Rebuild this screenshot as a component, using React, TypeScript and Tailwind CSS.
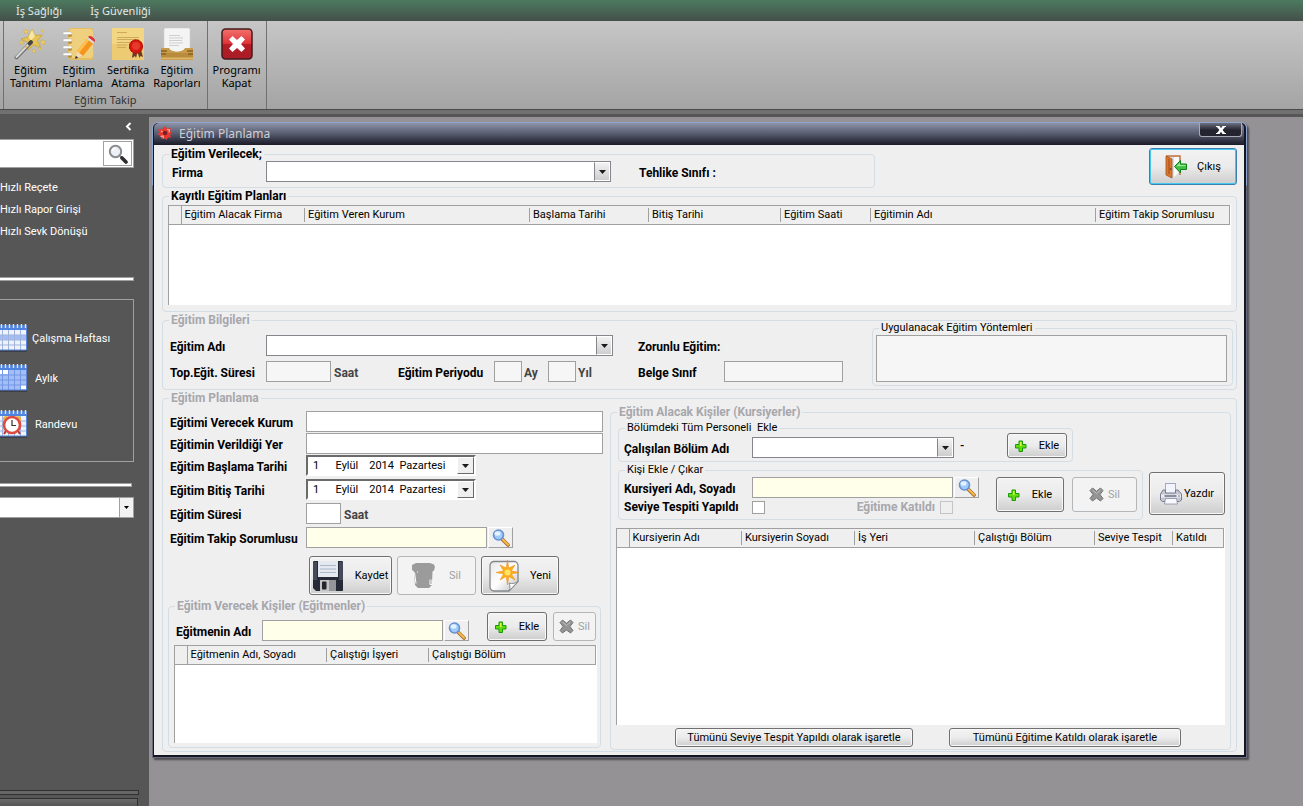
import React, { ReactNode } from "react";
import clsx from "clsx";

/* ---------- Ribbon icons ---------- */

const WandIcon = () => (
  <svg width="32" height="32" viewBox="0 0 32 32">
    <path d="M18 1l3 6.500 7.500-.5-5 5.500 3 7-7-2.500-5.500 5-.5-7.500L7 11l7-2z" fill="#e6c355" stroke="#c9a33c" strokeWidth=".8" />
    <path d="M18 1.500l3 6.500-4 4.500L14.500 9z" fill="#f8e7a0" />
    <path d="M2.500 29.500L17 14.500" stroke="#6e6e6e" strokeWidth="3.800" strokeLinecap="round" />
    <path d="M2.500 29L15 16" stroke="#d9d9d9" strokeWidth="2" strokeLinecap="round" />
    <path d="M15.500 15.500l1.500-1.500" stroke="#444" strokeWidth="3.800" strokeLinecap="round" />
    <g fill="#f0cf62" stroke="#c9a33c" strokeWidth=".4">
      <path d="M12 1l.8 1.600 1.800.2-1.300 1.200.4 1.800L12 5l-1.700.8.4-1.800-1.300-1.200 1.800-.2z" />
      <path d="M29 11l.9 2 2.100.2-1.600 1.400.5 2.200-1.900-1.100-1.900 1.100.5-2.200-1.600-1.400 2.100-.2z" />
      <path d="M7.500 12l.7 1.400 1.600.2-1.200 1.100.3 1.600-1.400-.8-1.400.8.3-1.600-1.200-1.100 1.600-.2z" />
      <circle cx="20" cy="23" r="1.500" />
      <circle cx="28.500" cy="3" r="1.200" />
      <circle cx="26" cy="21" r="1.200" />
      <circle cx="12" cy="19" r="1" />
    </g>
  </svg>
);

const NotebookIcon = () => (
  <svg width="32" height="32" viewBox="0 0 32 32">
    <rect x="5" y="0" width="26" height="32" rx="4" fill="#e4bd63" />
    <rect x="6" y="1" width="24" height="29" rx="3" fill="#efd07f" />
    {[5, 12, 19, 26].map((y) => (
      <g key={y}>
        <rect x="5" y={y - 1} width="4" height="5" rx="2" fill="#b98f38" />
        <rect x="0" y={y - 1} width="9" height="2.500" rx="1.200" fill="#fff" stroke="#aaa" strokeWidth=".4" />
      </g>
    ))}
    <path d="M12 31l2-8L24 11l6 4.500L20 28z" fill="#f5941e" />
    <path d="M14 23L24 11l2 1.500L16 25z" fill="#ffc04d" />
    <path d="M12 31l2-8 6 5z" fill="#f3dcae" />
    <path d="M12 31l.8-3.200 2.400 1.900z" fill="#333" />
    <path d="M24 11l1.600-2 6 4.500-1.600 2z" fill="#d9d9d9" />
    <path d="M25.600 9c1.500-1.800 6.400 1.200 6 4.500z" fill="#dd2f2f" stroke="#dd2f2f" />
  </svg>
);

const CertificateIcon = () => (
  <svg width="32" height="32" viewBox="0 0 32 32">
    <rect width="32" height="32" rx="1" fill="#eccb72" />
    <rect width="32" height="16" rx="1" fill="#f2d684" />
    <path d="M5 4.500h10M5 9.500h22M5 11.500h22M5 14.500h14M5 17h10M5 19.500h9" stroke="#cfa95a" strokeWidth="1" />
    <path d="M21 23l-1 7 3-2 1 2 1.500-6 2 6 1-2 2.500 1-2-7z" fill="#6e3a26" />
    <circle cx="24" cy="18.500" r="7" fill="#d31a12" />
    <circle cx="24" cy="18.500" r="6.500" fill="none" stroke="#a80f0a" strokeWidth="1" strokeDasharray="2 1.500" />
    <circle cx="24" cy="18" r="4" fill="#e63a2b" />
  </svg>
);

const TrayIcon = () => (
  <svg width="32" height="32" viewBox="0 0 32 32">
    <rect x="3" y="0" width="26" height="26" rx="1.500" fill="#f4f4f4" stroke="#d0d0d0" strokeWidth=".6" />
    <path d="M8 7.500h11M8 10h14M8 12.500h13M8 15h14M8 17.500h10" stroke="#cfcfcf" strokeWidth="1" />
    <path d="M0 20h8c1 5 15 5 16 0h8v12H0z" fill="#b98b3c" />
    <path d="M0 20h8c1 5 15 5 16 0h8v5H0z" fill="#c79b48" />
    <path d="M9 18h14c0 7-14 7-14 0z" fill="#f4f4f4" />
    <path d="M0 30.500h32" stroke="#dcb669" strokeWidth="2" />
    <path d="M0 23h6M0 26h5M26 23h6M27 26h5" stroke="#8a6122" strokeWidth="1.500" />
  </svg>
);

const CloseAppIcon = () => (
  <svg width="32" height="32" viewBox="0 0 32 32">
    <defs>
      <linearGradient id="closeRed" x1="0" y1="0" x2="0" y2="1">
        <stop offset="0" stopColor="#f2726c" />
        <stop offset=".48" stopColor="#e0343a" />
        <stop offset=".52" stopColor="#b51c26" />
        <stop offset="1" stopColor="#a81d26" />
      </linearGradient>
    </defs>
    <rect x="1" y="1" width="30" height="30" rx="3.500" fill="url(#closeRed)" stroke="#451a1c" strokeWidth="1.500" />
    <path d="M11.500 8L16 12l4.500-4 3.500 3.500-4 4.500 4 4.500-3.500 3.500-4.500-4-4.500 4L8 20.500l4-4.500-4-4.500z" fill="#fff" />
  </svg>
);

/* ---------- Form icons ---------- */

const LookupIcon = () => (
  <svg width="18" height="18" viewBox="0 0 18 18">
    <path d="M10 10l6 6" stroke="#a2692a" strokeWidth="3.600" strokeLinecap="round" />
    <path d="M10.500 10.300l5.500 5.500" stroke="#f6bb4d" strokeWidth="2" strokeLinecap="round" />
    <circle cx="6.500" cy="6" r="5" fill="#9dcbfa" stroke="#6a8fd0" strokeWidth="1.600" />
    <ellipse cx="5.500" cy="4.500" rx="3" ry="2.200" fill="#e3f2ff" />
  </svg>
);

const GreySearchIcon = () => (
  <svg width="20" height="20" viewBox="0 0 20 20">
    <path d="M12 12l2 2" stroke="#888" strokeWidth="2" />
    <path d="M14 14l4 4" stroke="#2d2d2d" strokeWidth="3.600" strokeLinecap="round" />
    <circle cx="7.500" cy="7.500" r="5.700" fill="#eef0f8" stroke="#8b8b8f" strokeWidth="2" />
    <path d="M4.500 7a3.500 3.500 0 013-3" stroke="#fff" strokeWidth="1.500" fill="none" />
  </svg>
);

const DoorIcon = () => (
  <svg width="22" height="24" viewBox="0 0 22 24">
    <path d="M1 1h14v17l-5 4.500L7 23z" fill="#dcdcdc" />
    <path d="M9 2h5v15l-5 5z" fill="#fafafa" />
    <path d="M1 1h14v5M15 17v3" stroke="#c4713a" strokeWidth="1.400" fill="none" />
    <path d="M1 1l6 3v19l-6-3z" fill="#d9772f" stroke="#a3521b" strokeWidth=".8" />
    <path d="M3 3.500l2 1v15l-2-1z" fill="#c06020" />
    <circle cx="5.800" cy="14" r=".8" fill="#4b2a10" />
    <path d="M9.500 11.500l6-6v3.500h6v5.500h-6V18z" fill="#3fc046" stroke="#13801a" strokeWidth="1" />
    <path d="M11.500 11.300l3.500-3.500V10h5.500v1z" fill="#a6eb9c" />
  </svg>
);

const PlusIcon = () => (
  <svg width="12" height="12" viewBox="0 0 12 12">
    <path d="M4 1h3.500v3.500H11V8H7.500v3.500H4V8H.5V4.500H4z" fill="#63dc10" stroke="#189a08" strokeWidth="1" />
    <path d="M5 2h1.500v4H5z" fill="#e0f547" />
  </svg>
);

const CrossIcon = () => (
  <svg width="15" height="15" viewBox="0 0 15 15">
    <path d="M3.500 1L7.500 4.200 11.500 1 14 3.500 11 7.500l3 4-2.500 2.500-4-3-4 3L1 11.500l3-4-3-4z" fill="#949494" stroke="#757575" strokeWidth="1" strokeLinejoin="round" />
    <path d="M3.500 3l4 3.500 4-3.500" stroke="#bcbcbc" strokeWidth="1" fill="none" />
  </svg>
);

const FloppyIcon = () => (
  <svg width="30" height="30" viewBox="0 0 30 30">
    <path d="M1 0h28a1 1 0 011 1v28a1 1 0 01-1 1H3l-3-3V1a1 1 0 011-1z" fill="#262a36" />
    <path d="M0 1h4v18H0zM26 1h4v18h-4z" fill="#454a59" />
    <rect x="5" y="0" width="20" height="16" fill="#e5e9ef" />
    <path d="M7 4.500h16M7 8h16M7 11.500h16" stroke="#a9b8cc" strokeWidth="1" />
    <rect x="7" y="19" width="16" height="11" fill="#c4c4c6" />
    <rect x="16" y="19" width="7" height="11" fill="#96969a" />
    <rect x="9" y="20.500" width="4.500" height="8" rx="1" fill="#22252e" />
  </svg>
);

const TrashIcon = () => (
  <svg width="23" height="25" viewBox="0 0 23 25">
    <path d="M4 0h14l4 1.500 1 2.500-1 3.500-1.500 1L20 22l-3 3H6l-3-3L2 8.500 0 7V2z" fill="#9b9b9b" />
    <path d="M2.500 9.500L4 20.500M5 9h1M20 16.500v5h-2v-5" stroke="#fff" strokeWidth="1" fill="none" />
  </svg>
);

const NewDocIcon = () => (
  <svg width="30" height="32" viewBox="0 0 30 32">
    <defs>
      <linearGradient id="docPaper" x1="0" y1="0" x2="1" y2="1">
        <stop offset="0" stopColor="#e6e6e6" />
        <stop offset=".5" stopColor="#fff" />
        <stop offset="1" stopColor="#bdbdbd" />
      </linearGradient>
    </defs>
    <path d="M5 1.500h20a4 4 0 014 4v16L20 31H5a4 4 0 01-4-4V5.500a4 4 0 014-4z" fill="url(#docPaper)" stroke="#85898d" strokeWidth="1.300" />
    <path d="M20 31c1.500-3 1-6 0-8 3 1 6 .5 9-1.500z" fill="#fff" stroke="#85898d" strokeWidth="1" />
    <path d="M18.500 0l1.300 8L26 5l-3.600 5.800L30 12.500l-7.600 1.400L26 20l-6.200-3.600L18.500 25l-1.300-8.600L11 20l3.600-6.100L7 12.500l7.600-1.700L11 5l6.200 3z" fill="#ffae1a" stroke="#e68a0c" strokeWidth=".5" />
    <circle cx="18.500" cy="12.500" r="3" fill="#ffe36b" />
  </svg>
);

const PrinterIcon = () => (
  <svg width="22" height="22" viewBox="0 0 22 22">
    <rect x="5.500" y=".5" width="10" height="10" fill="#f1f4fd" stroke="#a2a9c4" />
    <path d="M3 7h2.500v3h10V7H18l3.500 4v6l-2 1.500h-17L.5 17v-6z" fill="#c4c6d2" stroke="#6f7386" strokeWidth=".9" />
    <path d="M1 11.500h20v3H1z" fill="#edeef4" />
    <path d="M4.500 13h12" stroke="#4c4f60" strokeWidth="1.200" />
    <path d="M5.500 15.500h11l1 5.500h-13z" fill="#f8f9fd" stroke="#8a8ea4" strokeWidth=".8" />
    <circle cx="19" cy="13" r=".8" fill="#6b6b7b" />
  </svg>
);

const AppLogo = () => (
  <svg width="14" height="14" viewBox="0 0 14 14">
    <path d="M7 0l2 2.500 4-.5-1 3 2 1.500-1.800 2 .8 3.200-3-.2L8.500 14 6 12l-3 1-.3-3L0 8.500 1.200 6 0 3.500 4.500 3z" fill="#e8392f" />
    <circle cx="7" cy="7" r="2.200" fill="#7c1c25" />
    <path d="M2.500 10.500l2.500-.5.500 2.500M9 3.500l2.500.5-.5 2.500M3 5l1.500 1" fill="none" stroke="#f6b5ac" strokeWidth="1.200" />
  </svg>
);

// Takvim ikonu, sol kenarı panelin dışında kalıyor
const CalendarIcon = ({ kind }: { kind: "week" | "month" | "clock" }) => (
  <svg width="27" height="28" viewBox="0 0 27 28">
    <rect x="-4" y="26" width="31" height="2" fill="#3c3f47" />
    <rect x="-4" y="2" width="31" height="24" fill="#eef2fa" />
    <rect x="-4" y="1" width="31" height="5" fill="#4f83e0" />
    {kind === "week" && <rect x="-4" y="11" width="31" height="5" fill="#a3bdf6" />}
    {kind === "month" && <path d="M-4 6h31v20H-4z" fill="#a3bdf6" />}
    {kind === "month" && <path d="M0 6h8v4H0zM21 21h5v4h-5z" fill="#fff" />}
    <path
      d="M-4 11h31M-4 16h31M-4 21h31M2.500 6v20M8.500 6v20M14.500 6v20M20.500 6v20"
      stroke={kind === "month" ? "#7598e6" : "#9fb3dc"}
      strokeWidth="1"
    />
    <path d="M26.500 1v25H0" stroke="#5b86d6" strokeWidth="1" fill="none" />
    <path d="M1.500 0v4M5.500 0v4M9.500 0v4M13.500 0v4M17.500 0v4M21.500 0v4M25.500 0v4" stroke="#dfe4ee" strokeWidth="1.400" />
    {kind === "clock" && (
      <g>
        <circle cx="6" cy="9" r="3" fill="#e9b64a" />
        <circle cx="18" cy="9" r="3" fill="#e9b64a" />
        <path d="M6 21l-2 3M18 21l2 3" stroke="#b3352c" strokeWidth="2" />
        <circle cx="12" cy="15" r="8" fill="#fff" stroke="#dc4a40" strokeWidth="2.600" />
        <path d="M12 10v5.500h4" stroke="#333" strokeWidth="1.200" fill="none" />
      </g>
    )}
  </svg>
);

const Arrow = () => (
  <svg width="7" height="4" viewBox="0 0 7 4">
    <path d="M0 0h7L3.500 4z" fill="#1a1a1a" />
  </svg>
);

/* ---------- Shared controls ---------- */

const Group = ({
  title,
  muted,
  plain,
  className,
  bodyClassName,
  children,
}: {
  title: string;
  muted?: boolean;
  plain?: boolean;
  className?: string;
  bodyClassName?: string;
  children: ReactNode;
}) => (
  <fieldset className={clsx("min-w-0 rounded-[4px] border border-[#d3dde6]", className)}>
    <legend
      className={clsx(
        "ml-1.5 px-0.5 leading-[14px] whitespace-pre",
        !plain && "text-[12px] font-bold",
        muted ? "text-[#a7a7ad]" : "text-black"
      )}
    >
      {title}
    </legend>
    <div className={bodyClassName}>{children}</div>
  </fieldset>
);

const Label = ({ id, className, children }: { id: string; className?: string; children: ReactNode }) => (
  <label htmlFor={id} className={clsx("shrink-0 pt-1 text-[12px] font-bold whitespace-nowrap", className)}>
    {children}
  </label>
);

const TextBox = ({
  id,
  className,
  disabled,
  lookup,
}: {
  id: string;
  className?: string;
  disabled?: boolean;
  lookup?: boolean;
}) => (
  <input
    id={id}
    type="text"
    disabled={disabled}
    className={clsx(
      "h-[21px] shrink-0 border border-[#a0a0a0] px-1 outline-none",
      disabled ? "bg-[#f6f6f6]" : lookup ? "bg-[#ffffea]" : "bg-white",
      className
    )}
  />
);

const Combo = ({ id, className }: { id: string; className?: string }) => (
  <div className={clsx("grid h-[21px] shrink-0 border border-[#85858c] bg-white", className)}>
    <select id={id} className="col-start-1 row-start-1 w-full appearance-none bg-transparent outline-none">
      <option></option>
    </select>
    <span className="pointer-events-none col-start-1 row-start-1 flex w-4 items-center justify-center justify-self-end border border-l-[#85858c] border-t-white border-r-white border-b-white bg-linear-to-b from-[#f2f2f2] to-[#cecece]">
      <Arrow />
    </span>
  </div>
);

const DateBox = ({ id }: { id: string }) => (
  <div className="grid h-[21px] w-[170px] shrink-0 border-2 border-t-[#6b6b6b] border-r-white border-b-white border-l-[#6b6b6b] bg-white">
    <select id={id} className="col-start-1 row-start-1 w-full appearance-none bg-transparent pl-[5px] outline-none">
      <option>{"1\u00a0\u00a0\u00a0\u00a0\u00a0\u00a0Eylül\u00a0\u00a0\u00a0\u00a02014\u00a0\u00a0Pazartesi"}</option>
    </select>
    <span className="pointer-events-none col-start-1 row-start-1 flex w-[17px] items-center justify-center justify-self-end border border-t-white border-r-[#6b6b6b] border-b-[#6b6b6b] border-l-white bg-[#efefef]">
      <Arrow />
    </span>
  </div>
);

const LookupButton = ({ label }: { label: string }) => (
  <button
    aria-label={label}
    className="ml-px flex h-[21px] w-[25px] shrink-0 items-center justify-center border border-t-white border-r-[#a0a0a0] border-b-[#a0a0a0] border-l-white bg-[#efefef]"
  >
    <LookupIcon />
  </button>
);

const Button = ({
  icon,
  disabled,
  className,
  children,
}: {
  icon?: ReactNode;
  disabled?: boolean;
  className?: string;
  children: ReactNode;
}) => (
  <button
    disabled={disabled}
    className={clsx(
      "flex shrink-0 items-center justify-center rounded-[3px] border whitespace-nowrap",
      disabled
        ? "border-[#b4b7b9] bg-[#f3f3f3] text-[#a0a0a4]"
        : "border-[#707070] bg-linear-to-b from-[#f3f3f3] from-0% via-[#ebebeb] via-50% to-[#cdcdcd] text-black inset-ring inset-ring-[#f8f8f8]",
      className
    )}
  >
    {icon}
    {children}
  </button>
);

type Column = { title: string; width: string };

const DataTable = ({ columns, className }: { columns: Column[]; className?: string }) => (
  <div className={clsx("border-l border-[#a0a0a0] bg-white pr-px", className)}>
    <table className="w-full table-fixed border-collapse">
      <thead>
        <tr className="h-[19px] border-y border-r border-[#a0a0a0] bg-[#efefef]">
          <th className="w-3 border-r border-[#a0a0a0] p-0"></th>
          {columns.map((col, i) => (
            <th key={col.title} className={clsx("p-0 text-left font-normal", col.width)}>
              <span
                className={clsx(
                  "block overflow-hidden pl-[3px] leading-[14px] whitespace-nowrap",
                  i < columns.length - 1 && "border-r border-[#a0a0a0]"
                )}
              >
                {col.title}
              </span>
            </th>
          ))}
        </tr>
      </thead>
      <tbody></tbody>
    </table>
  </div>
);

/* ---------- Data ---------- */

const ribbonItems = [
  { line1: "Eğitim", line2: "Tanıtımı", icon: <WandIcon /> },
  { line1: "Eğitim", line2: "Planlama", icon: <NotebookIcon /> },
  { line1: "Sertifika", line2: "Atama", icon: <CertificateIcon /> },
  { line1: "Eğitim", line2: "Raporları", icon: <TrayIcon /> },
];

const planColumns: Column[] = [
  { title: "Eğitim Alacak Firma", width: "w-[124px]" },
  { title: "Eğitim Veren Kurum", width: "w-[225px]" },
  { title: "Başlama Tarihi", width: "w-[119px]" },
  { title: "Bitiş Tarihi", width: "w-[132px]" },
  { title: "Eğitim Saati", width: "w-[90px]" },
  { title: "Eğitimin Adı", width: "w-[225px]" },
  { title: "Eğitim Takip Sorumlusu", width: "w-auto" },
];

const trainerColumns: Column[] = [
  { title: "Eğitmenin Adı, Soyadı", width: "w-[140px]" },
  { title: "Çalıştığı İşyeri", width: "w-[102px]" },
  { title: "Çalıştığı Bölüm", width: "w-auto" },
];

const traineeColumns: Column[] = [
  { title: "Kursiyerin Adı", width: "w-[113px]" },
  { title: "Kursiyerin Soyadı", width: "w-[113px]" },
  { title: "İş Yeri", width: "w-[120px]" },
  { title: "Çalıştığı Bölüm", width: "w-[120px]" },
  { title: "Seviye Tespit", width: "w-[78px]" },
  { title: "Katıldı", width: "w-auto" },
];

/* ---------- Page parts ---------- */

const RibbonButton = ({ icon, line1, line2 }: { icon: ReactNode; line1: string; line2: string }) => (
  <button className="flex flex-col items-center pt-[7px] leading-[13px]">
    {icon}
    <span className="pt-[3px]">{line1}</span>
    <span>{line2}</span>
  </button>
);

const Ribbon = () => (
  <header className="font-['Noto_Sans',sans-serif] text-[11px]">
    <nav className="flex h-[21px] items-center gap-7 bg-linear-to-b from-[#4c7a5f] to-[#43504a] pl-4 text-[#e4e8e4]">
      <a href="#saglik">İş Sağlığı</a>
      <a href="#guvenlik">İş Güvenliği</a>
    </nav>
    <div className="flex h-[88px] bg-linear-to-b from-[#c6c6c6] to-[#a4a4a4] pl-[3px] text-black">
      <div className="flex flex-col border-x border-[#707070] px-1.5">
        <div className="flex gap-1">
          {ribbonItems.map((item) => (
            <RibbonButton key={item.line2} {...item} />
          ))}
        </div>
        <div className="pt-1 text-center leading-[13px] text-[#333]">Eğitim Takip</div>
      </div>
      <div className="border-r border-[#707070] px-[5px]">
        <RibbonButton icon={<CloseAppIcon />} line1="Programı" line2="Kapat" />
      </div>
    </div>
    <div className="h-2 border-t border-[#4a4a4a] bg-linear-to-b from-[#707070] from-50% to-[#565656] to-50%"></div>
  </header>
);

const Sidebar = () => (
  <aside className="flex w-[149px] shrink-0 flex-col bg-[#565656] text-white">
    <button aria-label="Paneli daralt" className="mr-[17px] flex h-[18px] items-center self-end">
      <svg width="7" height="9" viewBox="0 0 7 9">
        <path d="M5.500 1L2 4.500 5.500 8" stroke="#fff" strokeWidth="2" fill="none" />
      </svg>
    </button>
    <div className="mt-1 mr-[15px] flex h-[29px] border border-l-0 border-[#a0a0a0] bg-white p-px">
      <input aria-label="Ara" type="text" className="min-w-0 flex-1 px-1 text-black outline-none" />
      <button aria-label="Bul" className="flex w-[29px] items-center justify-center border border-[#a0a0a0]">
        <GreySearchIcon />
      </button>
    </div>
    <nav className="mt-[9px] flex flex-col leading-[22px]">
      <a href="#recete">Hızlı Reçete</a>
      <a href="#rapor">Hızlı Rapor Girişi</a>
      <a href="#sevk">Hızlı Sevk Dönüşü</a>
    </nav>
    <div className="mt-[34px] mr-[15px] h-1 border-y border-r border-[#a0a0a0] bg-white"></div>
    <div className="mt-[18px] mr-[15px] flex h-[163px] flex-col border border-l-0 border-[#a0a0a0] pt-6">
      <a href="#hafta" className="flex items-center gap-[5px]">
        <CalendarIcon kind="week" />
        Çalışma Haftası
      </a>
      <a href="#ay" className="mt-3 flex items-center gap-2">
        <CalendarIcon kind="month" />
        Aylık
      </a>
      <a href="#randevu" className="mt-[18px] flex items-center gap-2">
        <CalendarIcon kind="clock" />
        Randevu
      </a>
    </div>
    <div className="mt-[21px] mr-[17px] h-1 border-y border-r border-[#a0a0a0] bg-white"></div>
    <div className="mt-2.5 mr-[15px] grid h-[21px] border border-l-0 border-[#a0a0a0] bg-white">
      <select aria-label="Liste" className="col-start-1 row-start-1 w-full appearance-none text-black outline-none">
        <option></option>
      </select>
      <span className="pointer-events-none col-start-1 row-start-1 flex w-[14px] items-center justify-center justify-self-end border-l border-[#a0a0a0] bg-[#f2f2f2]">
        <svg width="5" height="3" viewBox="0 0 5 3">
          <path d="M0 0h5L2.500 3z" fill="#000" />
        </svg>
      </span>
    </div>
    <div className="mt-auto mr-2.5 h-[5px] shrink-0 border border-l-0 border-[#303030] bg-[#666]"></div>
    <div className="mt-[3px] mr-[11px] h-2 shrink-0 border border-b-0 border-l-0 border-[#303030] bg-linear-to-b from-[#6a6a6a] to-[#555]"></div>
  </aside>
);

const PlanInfo = () => (
  <Group title="Eğitim Bilgileri" muted className="mt-px" bodyClassName="flex pl-[7px]">
    <div className="flex pb-[7px]">
      <div className="flex w-[468px] shrink-0 flex-col gap-[5px] pt-2">
        <div className="flex">
          <Label id="egitimAdi" className="w-24">
            Eğitim Adı
          </Label>
          <Combo id="egitimAdi" className="w-[347px]" />
        </div>
        <div className="flex">
          <Label id="topSure" className="w-24">
            Top.Eğit. Süresi
          </Label>
          <TextBox id="topSure" disabled className="w-[65px]" />
          <span className="w-[67px] pt-1 pl-[3px] text-[12px] font-bold text-[#444]">Saat</span>
          <Label id="periyotAy" className="w-24">
            Eğitim Periyodu
          </Label>
          <TextBox id="periyotAy" disabled className="w-7" />
          <label htmlFor="periyotAy" className="w-[26px] pt-1 pl-0.5 text-[12px] font-bold text-[#444]">
            Ay
          </label>
          <TextBox id="periyotYil" disabled className="w-7" />
          <label htmlFor="periyotYil" className="pt-1 pl-0.5 text-[12px] font-bold text-[#444]">
            Yıl
          </label>
        </div>
      </div>
      <div className="flex w-[234px] shrink-0 flex-col gap-[5px] pt-2">
        <div className="h-[21px] pt-1 text-[12px] font-bold">Zorunlu Eğitim:</div>
        <div className="flex">
          <Label id="belge" className="w-[86px]">
            Belge Sınıf
          </Label>
          <TextBox id="belge" disabled className="w-[119px]" />
        </div>
      </div>
    </div>
    <Group
      title="Uygulanacak Eğitim Yöntemleri"
      plain
      className="-mt-1.5 mr-[3px] flex-1 self-start"
      bodyClassName="pr-[5px] pb-[3px] pl-[3px]"
    >
      <textarea
        aria-label="Uygulanacak Eğitim Yöntemleri"
        disabled
        className="block h-[47px] w-full resize-none border border-[#a0a0a0] bg-[#f6f6f6]"
      />
    </Group>
  </Group>
);

const PlanForm = () => (
  <div className="flex w-[438px] shrink-0 flex-col pt-1.5 pb-0.5 pl-[5px]">
    <div className="flex flex-col gap-px pl-0.5">
      <div className="flex">
        <Label id="kurum" className="w-[136px]">
          Eğitimi Verecek Kurum
        </Label>
        <TextBox id="kurum" className="w-[297px]" />
      </div>
      <div className="flex">
        <Label id="yer" className="w-[136px]">
          Eğitimin Verildiği Yer
        </Label>
        <TextBox id="yer" className="w-[297px]" />
      </div>
      <div className="flex">
        <Label id="baslama" className="w-[136px]">
          Eğitim Başlama Tarihi
        </Label>
        <DateBox id="baslama" />
      </div>
    </div>
    <div className="mt-[3px] flex flex-col gap-[3px] pl-0.5">
      <div className="flex">
        <Label id="bitis" className="w-[136px]">
          Eğitim Bitiş Tarihi
        </Label>
        <DateBox id="bitis" />
      </div>
      <div className="flex">
        <Label id="sure" className="w-[136px]">
          Eğitim Süresi
        </Label>
        <TextBox id="sure" className="w-[35px]" />
        <span className="pt-1 pl-[3px] text-[12px] font-bold text-[#444]">Saat</span>
      </div>
      <div className="flex">
        <Label id="sorumlu" className="w-[136px]">
          Eğitim Takip Sorumlusu
        </Label>
        <TextBox id="sorumlu" lookup className="w-[181px]" />
        <LookupButton label="Sorumlu ara" />
      </div>
    </div>
    <div className="mt-2 flex h-[39px] gap-[5px] pl-[141px]">
      <Button icon={<FloppyIcon />} className="w-[83px] gap-3">
        Kaydet
      </Button>
      <Button disabled icon={<TrashIcon />} className="w-[79px] gap-[14px]">
        Sil
      </Button>
      <Button icon={<NewDocIcon />} className="w-[78px] gap-[11px]">
        Yeni
      </Button>
    </div>
    <Group title="Eğitim Verecek Kişiler (Eğitmenler)" muted className="mt-1" bodyClassName="pr-[3px] pb-1 pl-[5px]">
      <div className="flex h-7 items-end pr-px">
        <Label id="egitmen" className="h-[21px] w-[88px] pl-0.5">
          Eğitmenin Adı
        </Label>
        <TextBox id="egitmen" lookup className="w-[181px]" />
        <LookupButton label="Eğitmen ara" />
        <Button icon={<PlusIcon />} className="ml-auto h-[29px] w-[60px] gap-3">
          Ekle
        </Button>
        <Button disabled icon={<CrossIcon />} className="ml-1.5 h-[29px] w-[43px] gap-1">
          Sil
        </Button>
      </div>
      <DataTable columns={trainerColumns} className="mt-1 h-[98px]" />
    </Group>
  </div>
);

const Trainees = () => (
  <Group
    title="Eğitim Alacak Kişiler (Kursiyerler)"
    muted
    className="mr-[5px] ml-[9px] min-w-[620px] flex-1"
    bodyClassName="px-[5px] pb-0.5"
  >
    <Group title="Bölümdeki Tüm Personeli  Ekle" plain className="mt-0.5 ml-0.5 w-[455px]" bodyClassName="px-[5px] pb-[3px]">
      <div className="flex h-[23px] items-end">
        <Label id="bolum" className="h-[21px] w-32">
          Çalışılan Bölüm Adı
        </Label>
        <Combo id="bolum" className="w-[202px]" />
        <span className="pb-1 pl-1.5 font-bold">-</span>
        <Button icon={<PlusIcon />} className="ml-auto h-[25px] w-[60px] gap-3">
          Ekle
        </Button>
      </div>
    </Group>
    <div className="mt-px ml-0.5 flex items-center gap-1.5">
      <Group title="Kişi Ekle / Çıkar" plain className="w-[525px]" bodyClassName="px-[5px] pb-[5px]">
        <div className="flex items-start">
          <div className="w-[355px]">
            <div className="flex">
              <Label id="kursiyer" className="w-32">
                Kursiyeri Adı, Soyadı
              </Label>
              <TextBox id="kursiyer" lookup className="w-[201px]" />
              <LookupButton label="Kursiyer ara" />
            </div>
            <div className="mt-0.5 flex h-[14px] items-center text-[12px] font-bold">
              <label htmlFor="seviye" className="w-32">
                Seviye Tespiti Yapıldı
              </label>
              <input id="seviye" type="checkbox" className="size-[13px] appearance-none border border-[#a0a0a0] bg-white checked:bg-[#707070]" />
              <label htmlFor="katildi" className="ml-auto text-[#a7a7ad]">
                Eğitime Katıldı
              </label>
              <input id="katildi" type="checkbox" disabled className="mr-[26px] ml-[5px] size-[13px] appearance-none border border-[#c4c4c8]" />
            </div>
          </div>
          <Button icon={<PlusIcon />} className="ml-auto h-[35px] w-[68px] gap-3">
            Ekle
          </Button>
          <Button disabled icon={<CrossIcon />} className="ml-2 h-[35px] w-[65px] gap-1">
            Sil
          </Button>
        </div>
      </Group>
      <Button icon={<PrinterIcon />} className="mt-1 h-[43px] w-[76px] gap-0.5">
        Yazdır
      </Button>
    </div>
    <DataTable columns={traineeColumns} className="mt-2 h-[197px]" />
    <div className="mt-[3px] flex justify-center gap-9 pl-[15px]">
      <Button className="h-[19px] w-[238px]">Tümünü Seviye Tespit Yapıldı olarak işaretle</Button>
      <Button className="h-[19px] w-[232px]">Tümünü Eğitime Katıldı olarak işaretle</Button>
    </div>
  </Group>
);

const PlanWindow = () => (
  <section className="rounded-t-md bg-linear-to-b from-[#8ea5cf] from-[63px] to-[#676b7b] to-[64px] p-px shadow-[2px_2px_2px_#4c4a50]">
    <div className="rounded-t-[5px] bg-[#161623] pr-0.5 pb-0.5 pl-px">
      <div className="flex h-[22px] items-start rounded-t-[5px] bg-linear-to-b from-[#8d93a8] via-[#565b6e] via-50% to-[#1b1b28] pl-1">
        <span className="pt-[3px]">
          <AppLogo />
        </span>
        <h1 className="flex-1 pl-[7px] font-['Noto_Sans',sans-serif] text-[12px] leading-[22px] text-[#cfcfd4]">Eğitim Planlama</h1>
        <button
          aria-label="Kapat"
          className="mr-0.5 flex h-[14px] w-[43px] items-center justify-center rounded-b-[3px] border border-t-0 border-[#a8a9b3] bg-linear-to-b from-[#6f7282] to-[#23242f] to-55%"
        >
          <svg width="10" height="8" viewBox="0 0 10 8">
            <path d="M0 0h3.500L5 2.200 6.500 0H10v1H9L6.600 4 9 7h1v1H6.500L5 5.800 3.500 8H0V7h1l2.400-3L1 1H0z" fill="#fff" />
          </svg>
        </button>
      </div>
      <div className="bg-[#efefef] pt-0.5 pr-[7px] pb-[3px] pl-2">
        <div className="flex items-start justify-between">
          <Group title="Eğitim Verilecek;" className="w-[713px]" bodyClassName="flex pb-[5px] pl-[9px]">
            <Label id="firma" className="w-[94px]">
              Firma
            </Label>
            <Combo id="firma" className="w-[345px]" />
            <span className="pt-1 pl-7 text-[12px] font-bold">Tehlike Sınıfı :</span>
          </Group>
          <button className="mt-px flex h-[37px] w-[88px] items-center justify-center gap-2.5 rounded-[3px] border border-[#3c7fb1] bg-linear-to-b from-[#f3f3f3] via-[#ebebeb] via-50% to-[#cdcdcd] inset-ring inset-ring-[#46c8f0]">
            <DoorIcon />
            Çıkış
          </button>
        </div>
        <Group title="Kayıtlı Eğitim Planları" className="mt-px" bodyClassName="px-[5px] pt-0.5 pb-1.5">
          <DataTable columns={planColumns} className="h-[100px]" />
        </Group>
        <PlanInfo />
        <Group title="Eğitim Planlama" muted className="mt-px" bodyClassName="flex pb-px">
          <PlanForm />
          <Trainees />
        </Group>
      </div>
    </div>
  </section>
);

const App = () => {
  return (
    <div className="flex min-h-screen flex-col bg-[#949294] font-[Roboto,Arial,sans-serif] text-[11px] leading-[17px] text-black">
      <Ribbon />
      <div className="flex flex-1">
        <Sidebar />
        <main className="min-w-0 flex-1 pt-[5px] pr-14 pb-12 pl-[3px]">
          <PlanWindow />
        </main>
      </div>
    </div>
  );
};

export default App;
